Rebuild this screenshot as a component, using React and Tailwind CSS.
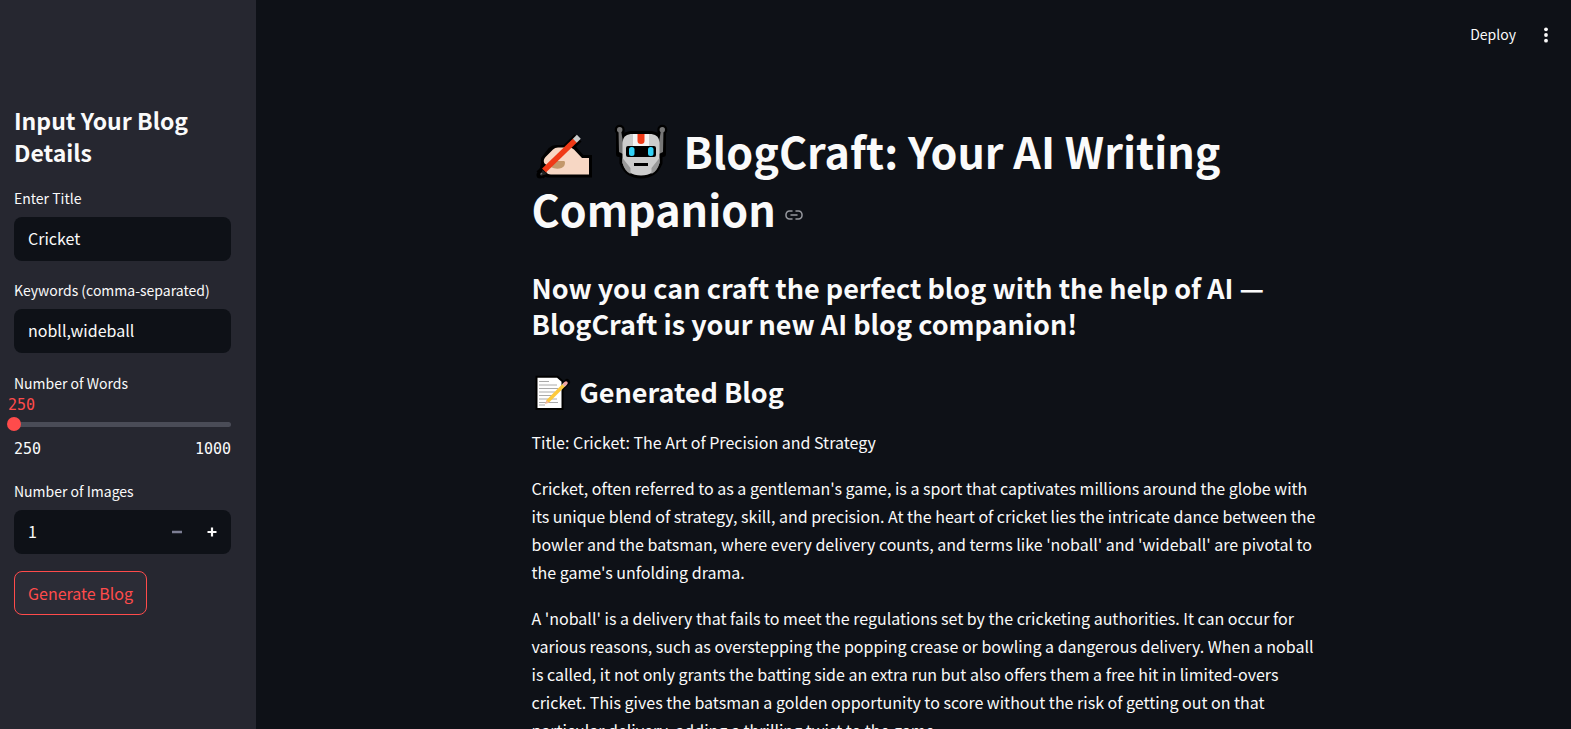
import { useState } from "react";

function WritingHand() {
  return (
    <svg viewBox="0 -2 76 58" className="inline-block h-[58px] w-[76px] align-top" role="img" aria-label="Writing hand">
      <g stroke="#000" strokeWidth="6" strokeLinejoin="round" fill="#000">
        <path d="M57 51.500V35h-7l-8-9-6-1H24q-3 0-5 2l-7 9v4l-2 10 6 1.500z" strokeLinejoin="miter" />
        <path d="M8 52 46 15" strokeWidth="10" />
        <path d="M8 52h.1" strokeWidth="7" strokeLinecap="round" />
      </g>
      <path d="M57 51.500V35h-7l-8-8.500q-2-2-5-2H26q-3 0-5 2l-7 7q-3 3-2 6 .5 1.500 2 2v7q1 3 5 3z" fill="#f7d7c4" />
      <path d="M22 38h10q1 0 1 1.500 0 4-3.500 5.500-5 2-11-1z" fill="#c3986b" />
      <path d="M12 47.500 43 17.500" stroke="#f03a17" strokeWidth="5.500" />
      <path d="M42.800 17.700l4-4" stroke="#ccc" strokeWidth="5.500" />
      <path d="M8.500 53l2-6 4.500 4z" fill="#222" />
      <path d="M8.500 51.500l1.500-1.500" stroke="#777" strokeWidth="1.200" />
    </svg>
  );
}

function Robot() {
  return (
    <svg viewBox="0 -2 76 58" className="inline-block h-[58px] w-[76px] align-top" role="img" aria-label="Robot">
      <g stroke="#000" strokeWidth="6" strokeLinejoin="round" fill="#000">
        <path d="M14.500 20q0-8 8-9h21q8 1 8 9v20q-5 12.500-18.500 12.500T14.500 40z" />
        <path d="M11 9v22h5V19l-3-11zM55 9v22h-5V19l3-11z" />
        <circle cx="11.700" cy="6.700" r="2" />
        <circle cx="54.300" cy="6.700" r="2" />
      </g>
      <path d="M10.500 7h2.500l2 12v12l-4-2zM55.500 7H53l-2 12v12l4-2z" fill="#767676" />
      <circle cx="11.700" cy="6.800" r="2.700" fill="#767676" />
      <circle cx="54.300" cy="6.800" r="2.700" fill="#767676" />
      <path d="M14.500 20q0-8 8-9h21q8 1 8 9v20q-5 12.500-18.500 12.500T14.500 40z" fill="#ccc" />
      <path d="M14.500 35l8 10v6q-6-3-8-11zM51.500 35l-8 10v6q6-3 8-11z" fill="#999" />
      <path d="M25 11h16v12H25z" fill="#f4f4f4" />
      <path d="M29.500 11h7v7q0 3-3.500 3t-3.500-3z" fill="#f03a17" />
      <rect x="18" y="23" width="30" height="11" rx="2" fill="#000" />
      <rect x="21" y="24" width="5.500" height="9" rx="2.500" fill="#31d2f7" />
      <rect x="40" y="24" width="5.500" height="9" rx="2.500" fill="#31d2f7" />
      <rect x="26" y="40" width="14" height="3" fill="#000" />
    </svg>
  );
}

function Memo() {
  return (
    <svg viewBox="1 -1 48 36" className="inline-block h-[36px] w-[48px] overflow-visible align-top" role="img" aria-label="Memo">
      <path d="M6.500 2.700H26l4.500 4V33h-24z" fill="#000" stroke="#000" strokeWidth="4" />
      <path d="M15 28 36 7" stroke="#000" strokeWidth="6" strokeLinecap="round" />
      <path d="M6.500 2.700H26l4.500 4V33h-24z" fill="#fff" />
      <path d="M8 6.500h10M8 10h18M8 13.500h19M8 17h16M8 20.500h13M8 24h18M8 27.500h19M8 30h6" stroke="#aaa" strokeWidth="1" />
      <path d="M16.500 26.500 33.500 9.500" stroke="#fdc93c" strokeWidth="3.500" />
      <path d="M32.500 10.500l2-2" stroke="#ccc" strokeWidth="3.500" />
      <path d="M34 9l1-1" stroke="#f2a3a0" strokeWidth="3.500" strokeLinecap="round" />
      <path d="M14 29l1.500-4 2.700 2.700z" fill="#f0b99a" />
    </svg>
  );
}

function LinkIcon() {
  return (
    <svg viewBox="0 0 18 10" className="inline-block h-[10px] w-[18px]" fill="none" stroke="#96989e" strokeWidth="1.500" strokeLinecap="round">
      <path d="M7 1H4.500a3.500 3.500 0 0 0-3.500 3.500v1A3.500 3.500 0 0 0 4.500 9H7M11 1h2.500a3.500 3.500 0 0 1 3.500 3.500v1A3.500 3.500 0 0 1 13.500 9H11M6 5h6" />
    </svg>
  );
}

function TextField({ id, label, value, onChange }) {
  return (
    <div>
      <label htmlFor={id} className="mb-2 block text-sm leading-[22px]">{label}</label>
      <input
        id={id}
        type="text"
        value={value}
        onChange={(e) => onChange(e.target.value)}
        className="block h-11 w-full rounded-lg bg-[#0e1117] px-3.5 pb-0.5 text-base outline-none"
      />
    </div>
  );
}

export default function App() {
  const [title, setTitle] = useState("Cricket");
  const [keywords, setKeywords] = useState("nobll,wideball");
  const [words, setWords] = useState(250);
  const [images, setImages] = useState("1");

  return (
    <div className="flex h-screen overflow-hidden bg-[#0e1117] font-['Noto_Sans_CJK_SC',sans-serif] text-[#fafafa]">
      <aside className="w-64 shrink-0 bg-[#262730] pt-[104px] pr-[25px] pl-3.5">
        <h2 className="mb-[19px] text-[23px] leading-8 font-semibold">Input Your Blog Details</h2>
        <div className="flex flex-col gap-[18px]">
          <TextField id="title" label="Enter Title" value={title} onChange={setTitle} />
          <TextField id="keywords" label="Keywords (comma-separated)" value={keywords} onChange={setKeywords} />
          <div className="pt-px pb-0.5">
            <label htmlFor="words" className="block text-sm leading-[22px]">Number of Words</label>
            <div className="font-['DejaVu_Sans_Mono',monospace] text-[15px] leading-[22px]">
              <output htmlFor="words" className="-ml-[6px] block text-[#ff4b4b]">{words}</output>
              <div className="grid h-4 items-center">
                <div className="col-start-1 row-start-1 h-[5px] rounded-full bg-[#4a4c57]" />
                <input
                  id="words"
                  type="range"
                  min="250"
                  max="1000"
                  value={words}
                  onChange={(e) => setWords(Number(e.target.value))}
                  className="col-start-1 row-start-1 -mx-[7px] h-3.5 appearance-none bg-transparent [&::-webkit-slider-thumb]:h-[14px] [&::-webkit-slider-thumb]:w-[14px] [&::-webkit-slider-thumb]:appearance-none [&::-webkit-slider-thumb]:rounded-full [&::-webkit-slider-thumb]:bg-[#ff4b4b]"
                />
              </div>
              <div className="mt-1.5 flex justify-between">
                <span>250</span>
                <span>1000</span>
              </div>
            </div>
          </div>
          <div>
            <label htmlFor="images" className="mb-2 block text-sm leading-[22px]">Number of Images</label>
            <div className="flex h-11 overflow-hidden rounded-lg bg-[#0e1117]">
              <input
                id="images"
                type="text"
                inputMode="numeric"
                value={images}
                onChange={(e) => setImages(e.target.value)}
                className="min-w-0 flex-1 px-3.5 pb-0.5 text-base outline-none"
              />
              <button type="button" aria-label="Decrease" className="flex w-9 items-center justify-center text-[#7c7e93]">
                <svg viewBox="0 0 10 10" className="size-2.5" stroke="currentColor" strokeWidth="2.500"><path d="M0 5h10" /></svg>
              </button>
              <button type="button" aria-label="Increase" className="flex w-9 items-center justify-center pr-0.5">
                <svg viewBox="0 0 10 10" className="size-2.5" stroke="currentColor" strokeWidth="2.200"><path d="M.5 5h9M5 .5v9" /></svg>
              </button>
            </div>
          </div>
        </div>
        <button type="button" className="mt-[17px] h-11 rounded-lg border border-[#ff4b4b] bg-[#2b2c36] px-[13px] text-base whitespace-nowrap text-[#ff4b4b]">
          Generate Blog
        </button>
      </aside>

      <main className="min-w-0 flex-1">
        <header className="flex h-[68px] items-center justify-end gap-[23px] pr-[18px]">
          <button type="button" className="text-sm">Deploy</button>
          <button type="button" aria-label="Menu">
            <svg viewBox="0 0 14 18" className="h-[18px] w-3.5" fill="currentColor">
              <circle cx="7" cy="4.300" r="1.900" />
              <circle cx="7" cy="10" r="1.900" />
              <circle cx="7" cy="15.700" r="1.900" />
            </svg>
          </button>
        </header>
        <div className="pt-[53px] pl-5">
          <article className="mx-auto max-w-[784px] text-base leading-7">
            <h1 className="text-[43px] leading-[58px] font-bold">
              <WritingHand />
              <Robot />
              BlogCraft: Your AI Writing Companion{" "}
              <a href="#blogcraft" aria-label="Link to heading" className="inline-flex align-middle"><LinkIcon /></a>
            </h1>
            <h2 className="mt-[33px] text-[27px] leading-[36px] font-semibold">
              Now you can craft the perfect blog with the help of AI — BlogCraft is your new AI blog companion!
            </h2>
            <h2 className="mt-8 text-[27px] leading-[36px] font-semibold">
              <Memo />
              Generated Blog
            </h2>
            <p className="mt-[18px]">Title: Cricket: The Art of Precision and Strategy</p>
            <p className="mt-[18px]">
              Cricket, often referred to as a gentleman's game, is a sport that captivates millions around the globe with its unique blend of strategy, skill, and precision. At the heart of cricket lies the intricate dance between the bowler and the batsman, where every delivery counts, and terms like 'noball' and 'wideball' are pivotal to the game's unfolding drama.
            </p>
            <p className="mt-[18px]">
              A 'noball' is a delivery that fails to meet the regulations set by the cricketing authorities. It can occur for various reasons, such as overstepping the popping crease or bowling a dangerous delivery. When a noball is called, it not only grants the batting side an extra run but also offers them a free hit in limited-overs cricket. This gives the batsman a golden opportunity to score without the risk of getting out on that particular delivery, adding a thrilling twist to the game.
            </p>
          </article>
        </div>
      </main>
    </div>
  );
}
